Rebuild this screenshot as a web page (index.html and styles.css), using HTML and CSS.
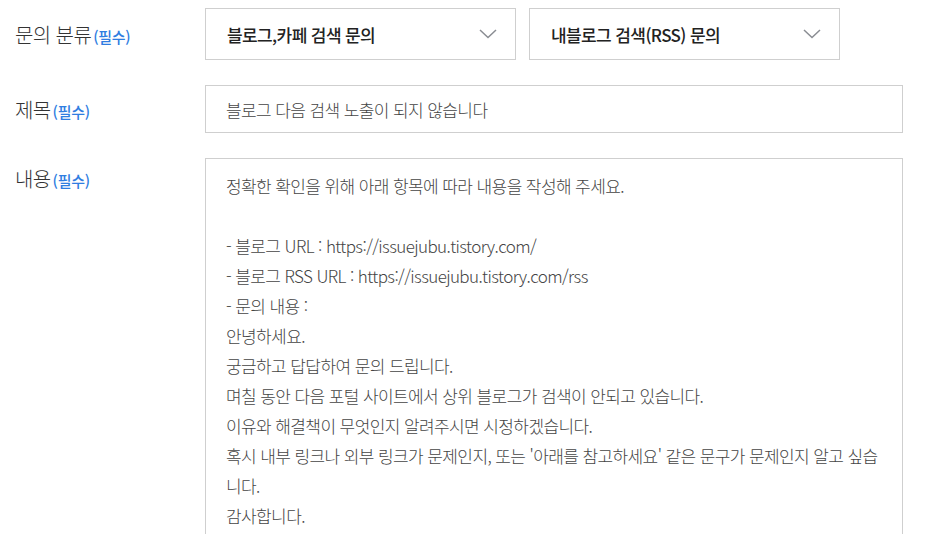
FILE: index.html
```html
<!DOCTYPE html>
<html lang="ko">
<head>
    <meta charset="UTF-8">
    <meta name="viewport" content="width=device-width, initial-scale=1.0">
    <title>문의하기</title>
    <link rel="stylesheet" href="styles.css">
</head>
<body>
    <form class="inquiry-form">
        <div class="form-row">
            <label class="form-label">문의 분류<span class="required">(필수)</span></label>
            <div class="form-field select-group">
                <div class="select-box">
                    <span class="select-text">블로그,카페 검색 문의</span>
                    <svg class="chevron" width="18" height="10" viewBox="0 0 18 10"><path d="M1 1 L9 8.5 L17 1" fill="none" stroke="#8a8d93" stroke-width="1.5"/></svg>
                </div>
                <div class="select-box">
                    <span class="select-text">내블로그 검색(RSS) 문의</span>
                    <svg class="chevron" width="18" height="10" viewBox="0 0 18 10"><path d="M1 1 L9 8.5 L17 1" fill="none" stroke="#8a8d93" stroke-width="1.5"/></svg>
                </div>
            </div>
        </div>
        <div class="form-row">
            <label class="form-label">제목<span class="required">(필수)</span></label>
            <div class="form-field">
                <input type="text" class="text-input" value="블로그 다음 검색 노출이 되지 않습니다">
            </div>
        </div>
        <div class="form-row row-top">
            <label class="form-label label-top">내용<span class="required">(필수)</span></label>
            <div class="form-field">
                <textarea class="text-area">정확한 확인을 위해 아래 항목에 따라 내용을 작성해 주세요.

- 블로그 URL : https://issuejubu.tistory.com/
- 블로그 RSS URL : https://issuejubu.tistory.com/rss
- 문의 내용 :
안녕하세요.
궁금하고 답답하여 문의 드립니다.
며칠 동안 다음 포털 사이트에서 상위 블로그가 검색이 안되고 있습니다.
이유와 해결책이 무엇인지 알려주시면 시정하겠습니다.
혹시 내부 링크나 외부 링크가 문제인지, 또는 '아래를 참고하세요' 같은 문구가 문제인지 알고 싶습니다.
감사합니다.</textarea>
            </div>
        </div>
    </form>
</body>
</html>
```

FILE: styles.css
```css
body {
    margin: 0;
    padding: 0;
    background-color: #fff;
    color: #333;
    font-family: "Noto Sans CJK KR", "Noto Sans", sans-serif;
    overflow: hidden;
}
.inquiry-form {
    padding: 8px 0 0 15px;
    display: flex;
    flex-direction: column;
    gap: 25px;
}
.form-row {
    display: flex;
    align-items: center;
}
.row-top {
    align-items: flex-start;
}
.form-label {
    width: 190px;
    flex-shrink: 0;
    font-size: 20px;
    font-weight: 300;
    letter-spacing: -0.6px;
    color: #333;
}
.label-top {
    padding-top: 6px;
}
.required {
    margin-left: 2px;
    font-size: 15px;
    font-weight: 500;
    letter-spacing: -0.3px;
    color: #2f7de1;
}
.form-field {
    width: 698px;
}
.select-group {
    display: flex;
    gap: 13px;
}
.select-box {
    box-sizing: border-box;
    width: 311px;
    height: 52px;
    border: 1px solid #cfcfcf;
    display: flex;
    align-items: center;
    justify-content: space-between;
    padding: 0 18px 0 21px;
}
.select-text {
    font-size: 17px;
    font-weight: 500;
    letter-spacing: -0.6px;
    color: #222;
}
.text-input {
    box-sizing: border-box;
    width: 100%;
    height: 48px;
    border: 1px solid #cfcfcf;
    padding: 0 20px;
    font-family: inherit;
    font-size: 17px;
    font-weight: 300;
    letter-spacing: -0.6px;
    color: #444;
    outline: none;
}
.text-area {
    box-sizing: border-box;
    display: block;
    width: 100%;
    height: 420px;
    border: 1px solid #cfcfcf;
    padding: 12px 18px 12px 20px;
    font-family: inherit;
    font-size: 17px;
    font-weight: 300;
    letter-spacing: -0.6px;
    line-height: 30px;
    color: #444;
    resize: none;
    overflow: hidden;
    outline: none;
}
```
